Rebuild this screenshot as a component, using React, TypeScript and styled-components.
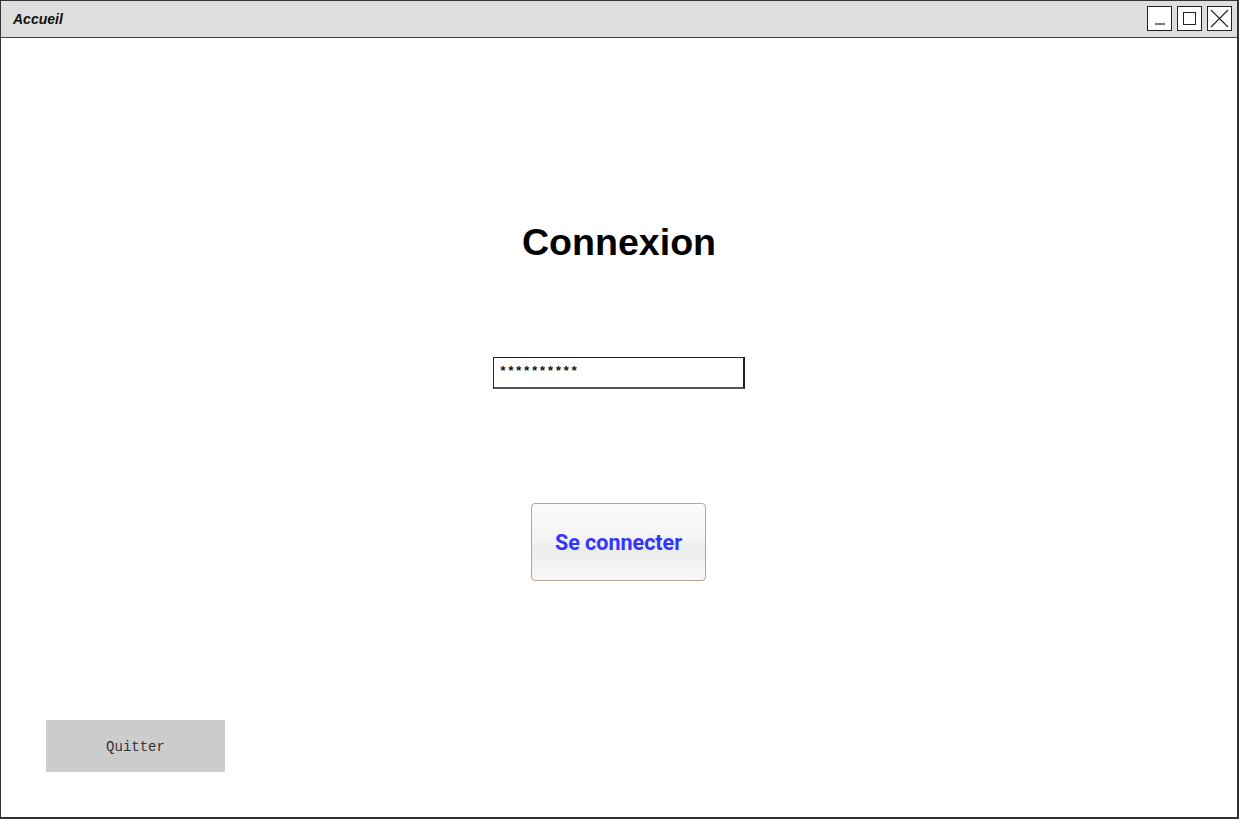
import React from 'react';
import styled, {createGlobalStyle} from 'styled-components';

const GlobalStyle = createGlobalStyle`
    html, body {
        margin: 0;
        padding: 0;
        background: #fff;
    }
    #root {
        width: 1240px;
        height: 820px;
    }
`;

const Window = styled.div`
    box-sizing: border-box;
    width: 1239px;
    height: 819px;
    border: 1px solid #333;
    border-right-width: 2px;
    border-bottom-width: 2px;
    display: flex;
    flex-direction: column;
    background: #fff;
`;

const TitleBar = styled.div`
    box-sizing: border-box;
    height: 37px;
    flex: none;
    background: #dedede;
    border-bottom: 1px solid #444;
    display: flex;
    align-items: center;
    justify-content: space-between;
    padding: 0 5px 1px 12px;
`;

const Title = styled.span`
    font-family: 'Liberation Sans', Arial, sans-serif;
    font-size: 14px;
    font-weight: bold;
    font-style: italic;
    color: #111;
`;

const Controls = styled.div`
    display: flex;
    gap: 5px;
`;

const ControlBox = styled.div`
    box-sizing: border-box;
    width: 25px;
    height: 25px;
    border: 1px solid #222;
    background: #fff;
    display: flex;
    align-items: center;
    justify-content: center;
`;

const Body = styled.main`
    flex: 1;
    display: flex;
    flex-direction: column;
    align-items: center;
`;

const Heading = styled.h1`
    margin: 183px 0 0;
    font-family: 'Liberation Sans', Arial, sans-serif;
    font-size: 37.6px;
    font-weight: bold;
    line-height: 42px;
    color: #000;
`;

const PasswordField = styled.div`
    box-sizing: border-box;
    margin: 94px 0 0;
    width: 252px;
    height: 32px;
    border: 1px solid #222;
    border-right-width: 2px;
    border-bottom: 2px solid #555;
    padding: 7px 0 0 5px;
    font-family: 'Liberation Mono', 'Courier New', monospace;
    font-size: 13.2px;
    font-weight: bold;
    line-height: 14px;
    color: #111;
`;

const ConnectButton = styled.button`
    box-sizing: border-box;
    margin: 114px 0 0 -1px;
    width: 175px;
    height: 78px;
    border: 1px solid #b5a794;
    border-radius: 4px;
    background: linear-gradient(to bottom, #fbfbfb 0%, #f4f4f4 45%, #ececec 60%, #f8f8f8 100%);
    font-family: Roboto, 'Liberation Sans', sans-serif;
    font-size: 21.5px;
    font-weight: bold;
    color: #3434ff;
    padding: 0;
    cursor: pointer;
`;

const Footer = styled.div`
    margin-top: auto;
    align-self: stretch;
    display: flex;
    padding: 0 0 45px 45px;
`;

const QuitButton = styled.button`
    width: 179px;
    height: 52px;
    border: none;
    background: #cccccc;
    font-family: 'Liberation Mono', 'Courier New', monospace;
    font-size: 14px;
    color: #333;
    padding: 2px 0 0;
    cursor: pointer;
`;

const MinimizeIcon = () => (
    <svg width="23" height="23" viewBox="0 0 23 23">
        <line x1="7" y1="17" x2="17" y2="17" stroke="#222" strokeWidth="1.2" />
    </svg>
);

const MaximizeIcon = () => (
    <svg width="23" height="23" viewBox="0 0 23 23">
        <rect x="5.5" y="5.5" width="12" height="12" fill="none" stroke="#222" strokeWidth="1" />
    </svg>
);

const CloseIcon = () => (
    <svg width="23" height="23" viewBox="0 0 23 23">
        <path d="M3 3 L20 20 M20 3 L3 20" stroke="#222" strokeWidth="1.1" />
    </svg>
);

export default function App() {
    return (
        <>
            <GlobalStyle />
            <Window>
                <TitleBar>
                    <Title>Accueil</Title>
                    <Controls>
                        <ControlBox>
                            <MinimizeIcon />
                        </ControlBox>
                        <ControlBox>
                            <MaximizeIcon />
                        </ControlBox>
                        <ControlBox>
                            <CloseIcon />
                        </ControlBox>
                    </Controls>
                </TitleBar>
                <Body>
                    <Heading>Connexion</Heading>
                    <PasswordField>**********</PasswordField>
                    <ConnectButton>Se connecter</ConnectButton>
                    <Footer>
                        <QuitButton>Quitter</QuitButton>
                    </Footer>
                </Body>
            </Window>
        </>
    );
}
